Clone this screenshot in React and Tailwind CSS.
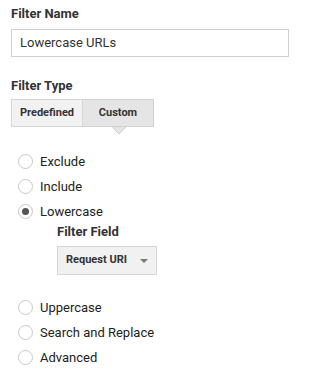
import React from "react";

function Radio({ label, checked }) {
  return (
    <div className="flex items-center h-[25px]">
      <div className="w-[15px] h-[15px] rounded-full border border-[#c8c8c8] bg-white flex items-center justify-center ml-[7px]">
        {checked && <div className="w-[7px] h-[7px] rounded-full bg-[#555]" />}
      </div>
      <span className="ml-[7px] text-[13px] text-[#222]">{label}</span>
    </div>
  );
}

export default function App() {
  return (
    <div className="w-[311px] h-[380px] bg-white pl-[11px] pt-[6px]" style={{ fontFamily: "Roboto, 'Liberation Sans', sans-serif" }}>
      <div className="text-[13px] font-bold text-[#333] leading-[16px]">Filter Name</div>
      <div className="mt-[7px] w-[278px] h-[28px] border border-[#d0d0d0] flex items-center pl-[8px] text-[13px] text-[#333]">
        Lowercase URLs
      </div>
      <div className="mt-[21px] text-[13px] font-bold text-[#333] leading-[16px]">Filter Type</div>
      <div className="mt-[5px] flex">
        <div className="w-[72px] h-[28px] border border-[#d6d6d6] bg-[#f2f2f2] flex items-center justify-center text-[11px] font-bold text-[#333]">Predefined</div>
        <div className="relative w-[71px] h-[28px] border border-l-0 border-[#d0d0d0] bg-[#e5e5e5] flex items-center justify-center text-[11px] font-bold text-[#333]">
          Custom
          <svg className="absolute left-[29px] top-[27px]" width="14" height="8" viewBox="0 0 14 8">
            <path d="M0 0 L7 7 L14 0 Z" fill="#e5e5e5" stroke="#d0d0d0" />
            <path d="M0.5 0 L13.5 0" stroke="#e5e5e5" strokeWidth="1.5" />
          </svg>
        </div>
      </div>
      <div className="mt-[22px]">
        <Radio label="Exclude" />
        <Radio label="Include" />
        <Radio label="Lowercase" checked />
        <div className="ml-[46px]">
          <div className="text-[13px] font-bold text-[#333] leading-[16px]">Filter Field</div>
          <div className="mt-[6px] w-[100px] h-[29px] border border-[#d6d6d6] bg-[#f1f1f1] flex items-center pl-[8px] text-[11px] font-bold text-[#333]">
            <span>Request URI</span>
            <svg className="ml-[13px]" width="8" height="4" viewBox="0 0 8 4"><path d="M0 0 L8 0 L4 4 Z" fill="#777" /></svg>
          </div>
        </div>
        <div className="mt-[20px]">
          <Radio label="Uppercase" />
          <Radio label="Search and Replace" />
          <Radio label="Advanced" />
        </div>
      </div>
    </div>
  );
}
